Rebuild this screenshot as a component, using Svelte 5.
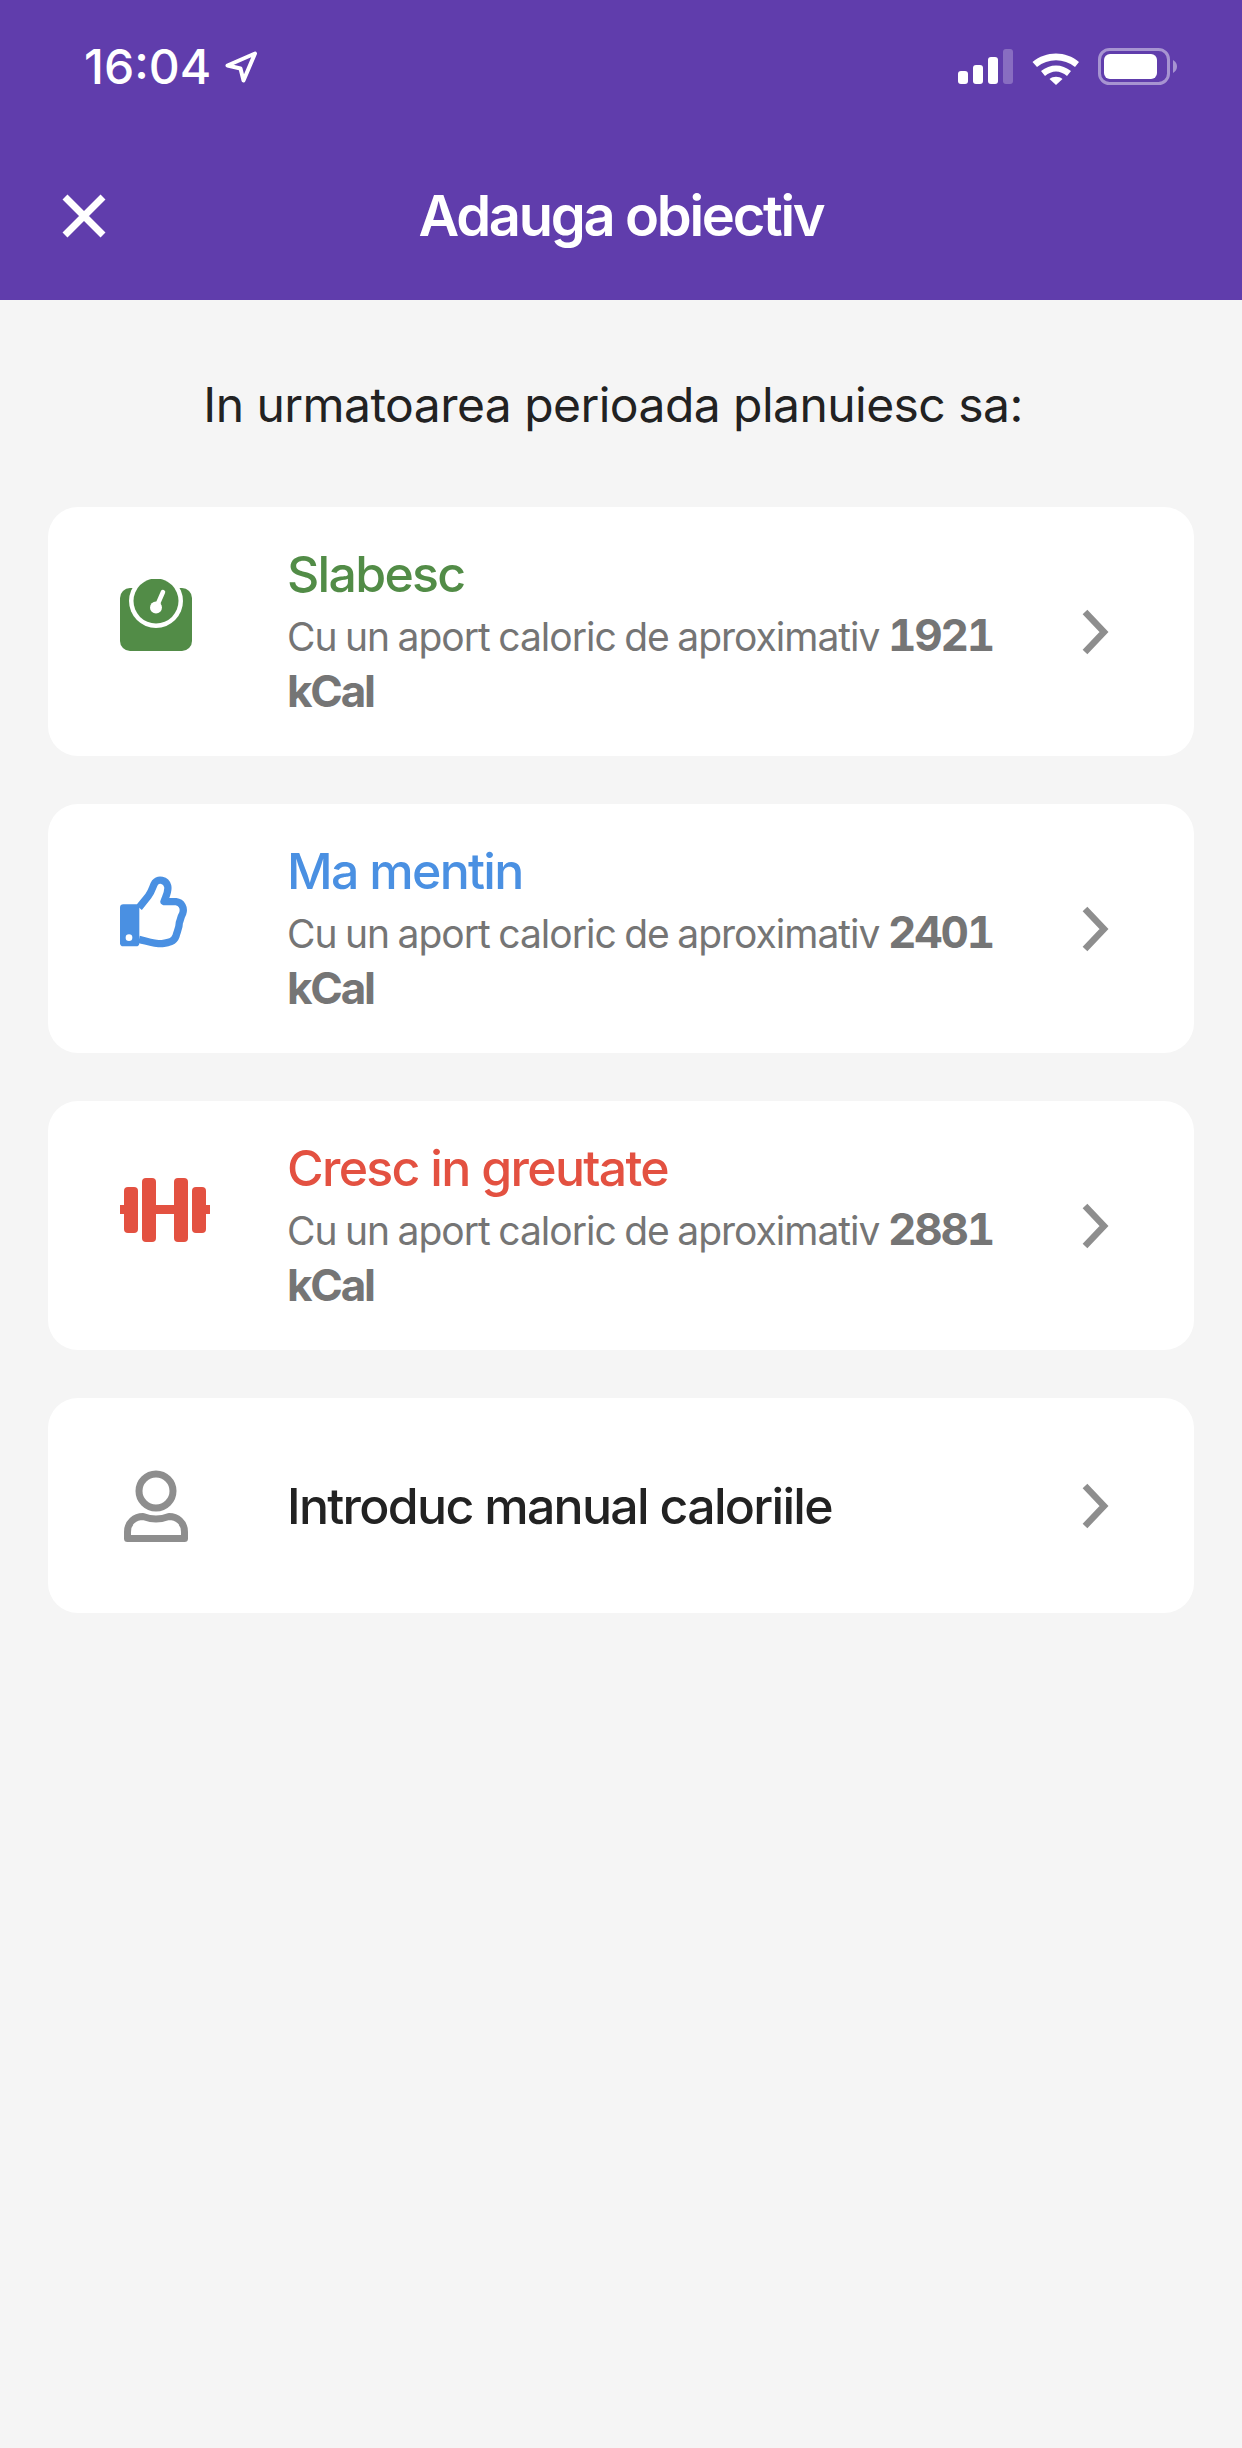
<script>
  const goals = [
    { name: 'Slabesc', cls: 'green', kcal: '1921', icon: 'scale' },
    { name: 'Ma mentin', cls: 'blue', kcal: '2401', icon: 'thumb' },
    { name: 'Cresc in greutate', cls: 'red', kcal: '2881', icon: 'bell' }
  ];
</script>

{#snippet chevron()}
  <svg class="chev" viewBox="0 0 30 50" aria-hidden="true"><path d="M4 5 L23 25 L4 45" /></svg>
{/snippet}

<div class="page">
  <header class="top">
    <div class="status">
      <div class="clock">
        <span class="time">16:04</span>
        <svg class="loc" viewBox="0 0 33 32" aria-hidden="true"><path d="M2.5 14.5 L30 2.5 L18.5 29.5 L15.5 17.5 Z" /></svg>
      </div>
      <svg class="sys" viewBox="0 0 220 38" aria-hidden="true">
        <rect x="0" y="23" width="10" height="13" rx="3" fill="#fff"/>
        <rect x="15" y="17" width="10" height="19" rx="3" fill="#fff"/>
        <rect x="30" y="9" width="10" height="27" rx="3" fill="#fff"/>
        <rect x="45" y="1" width="10" height="35" rx="3" fill="#fff" opacity=".25"/>
        <path d="M74.5 14 C88 2.500 108 2.500 121 14 L117 19 C106 10 90 10 79 19 Z" fill="#fff"/>
        <path d="M83 23 C92 15.500 104 15.500 113 23 L109 28 C102 22 94 22 87 28 Z" fill="#fff"/>
        <path d="M91.500 31 C95 28 101 28 104.500 31 L98 37 Z" fill="#fff"/>
        <rect x="141.500" y="1.500" width="69" height="34" rx="10" fill="none" stroke="#fff" stroke-opacity=".45" stroke-width="3"/>
        <rect x="146" y="6" width="53" height="25" rx="6" fill="#fff"/>
        <path d="M215 12 C218 14 219 16 219 18.500 C219 21 218 23 215 25 Z" fill="#fff" opacity=".45"/>
      </svg>
    </div>
    <div class="nav">
      <svg class="close" viewBox="0 0 44 44" aria-hidden="true"><path d="M3 3 L41 41 M41 3 L3 41" /></svg>
      <h1>Adauga obiectiv</h1>
      <span></span>
    </div>
  </header>

  <main>
    <p class="lead">In urmatoarea perioada planuiesc sa:</p>
    <div class="list">
      {#each goals as g}
        <div class="card">
          <svg class="icon" viewBox="0 0 96 80" aria-hidden="true">
            {#if g.icon === 'scale'}
              <rect x="0" y="9" width="72" height="63" rx="10" fill="#528c47"/>
              <ellipse cx="36" cy="22" rx="27" ry="27" fill="#fff"/>
              <circle cx="36" cy="22" r="22.500" fill="#528c47"/>
              <path d="M36 29 L43 13" stroke="#fff" stroke-width="4.500" stroke-linecap="round" fill="none"/>
              <circle cx="36" cy="28.500" r="6" fill="#fff"/>
            {:else if g.icon === 'thumb'}
              <g transform="translate(-30 -15) scale(.3333)">
                <rect x="90" y="130" width="58" height="126" rx="10" fill="#4a90e2"/>
                <circle cx="117" cy="230" r="10" fill="#fff"/>
                <path d="M147 140 L175 105 C188 88 188 75 195 65 C205 53 228 55 233 75 C237 90 228 105 222 122 L258 122 C275 124 284 140 278 158 C272 168 272 175 268 185 C268 200 262 210 258 225 C252 243 235 245 215 248 C190 248 170 240 147 235" fill="none" stroke="#4a90e2" stroke-width="22" stroke-linejoin="round"/>
              </g>
            {:else}
              <g fill="#e35141">
                <rect x="0" y="32" width="6" height="9" />
                <rect x="84" y="32" width="6" height="9" />
                <rect x="34" y="32" width="22" height="9" />
                <rect x="4" y="14" width="14" height="46" rx="4"/>
                <rect x="22" y="5" width="14" height="64" rx="4"/>
                <rect x="54" y="5" width="14" height="64" rx="4"/>
                <rect x="72" y="14" width="14" height="46" rx="4"/>
              </g>
            {/if}
          </svg>
          <div class="text">
            <div class="name {g.cls}">{g.name}</div>
            <div class="sub">Cu un aport caloric de aproximativ <b>{g.kcal} kCal</b></div>
          </div>
          {@render chevron()}
        </div>
      {/each}
      <div class="card short">
        <svg class="icon" viewBox="0 0 96 80" aria-hidden="true">
          <circle cx="36" cy="21" r="17" fill="none" stroke="#8e8e8e" stroke-width="7"/>
          <path d="M7.500 68.500 L7.500 62 C7.500 52 15 46.500 23 46.500 C31 49.500 41 49.500 49 46.500 C57 46.500 64.500 52 64.500 62 L64.500 68.500 Z" fill="none" stroke="#8e8e8e" stroke-width="7" stroke-linejoin="round"/>
        </svg>
        <div class="text"><div class="name dark">Introduc manual caloriile</div></div>
        {@render chevron()}
      </div>
    </div>
  </main>
</div>

<style>
  :global(body) { margin: 0; }
  .page {
    width: 1242px;
    min-height: 2448px;
    background: #f5f5f5;
    font-family: Inter, "Noto Sans", sans-serif;
  }
  .top { background: #603dac; height: 300px; color: #fff; }
  .status {
    height: 134px;
    display: flex;
    align-items: center;
    justify-content: space-between;
    padding: 0 64px 0 84px;
    box-sizing: border-box;
  }
  .clock { display: flex; align-items: center; gap: 14px; }
  .time { font-size: 48px; font-weight: 500; line-height: 56px; }
  .loc { width: 33px; height: 32px; }
  .loc path { fill: none; stroke: #fff; stroke-width: 4; stroke-linejoin: round; }
  .sys { width: 220px; height: 38px; }
  .nav {
    height: 166px;
    display: grid;
    grid-template-columns: 1fr auto 1fr;
    align-items: center;
    padding: 0 62px 2px;
    box-sizing: border-box;
  }
  .close { width: 44px; height: 44px; }
  .close path { stroke: #fff; stroke-width: 7; fill: none; }
  h1 { margin: 0; font-size: 56px; font-weight: 600; letter-spacing: -2.3px; }
  .lead {
    margin: 0;
    padding: 74px 16px 0 0;
    height: 207px;
    box-sizing: border-box;
    line-height: 62px;
    text-align: center;
    font-size: 48px;
    color: #222;
    letter-spacing: -0.55px;
  }
  .list {
    display: flex;
    flex-direction: column;
    gap: 48px;
    padding: 0 48px;
  }
  .card {
    background: #fff;
    border-radius: 30px;
    height: 249px;
    display: flex;
    align-items: center;
    padding: 0 83px 0 72px;
    box-sizing: border-box;
  }
  .card.short { height: 215px; }
  .icon {
    width: 96px;
    height: 80px;
    flex: none;
    align-self: flex-start;
    margin-top: 72px;
    margin-right: 71px;
  }
  .text { flex: 1; min-width: 0; }
  .name { font-size: 50px; font-weight: 500; line-height: 60px; letter-spacing: -1.7px; }
  .green { color: #528c47; }
  .blue { color: #4a90e2; }
  .red { color: #e35141; }
  .dark { color: #222; }
  .sub {
    font-size: 39px;
    line-height: 55px;
    margin-top: 4px;
    color: #757575;
    letter-spacing: -1px;
    word-spacing: -1.5px;
    width: 730px;
  }
  .sub b {
    font-size: 44px;
    font-weight: 700;
    letter-spacing: -2.2px;
    font-feature-settings: "tnum";
  }
  .chev { width: 30px; height: 50px; flex: none; }
  .chev path { fill: none; stroke: #8e8e8e; stroke-width: 6.500; }
</style>
